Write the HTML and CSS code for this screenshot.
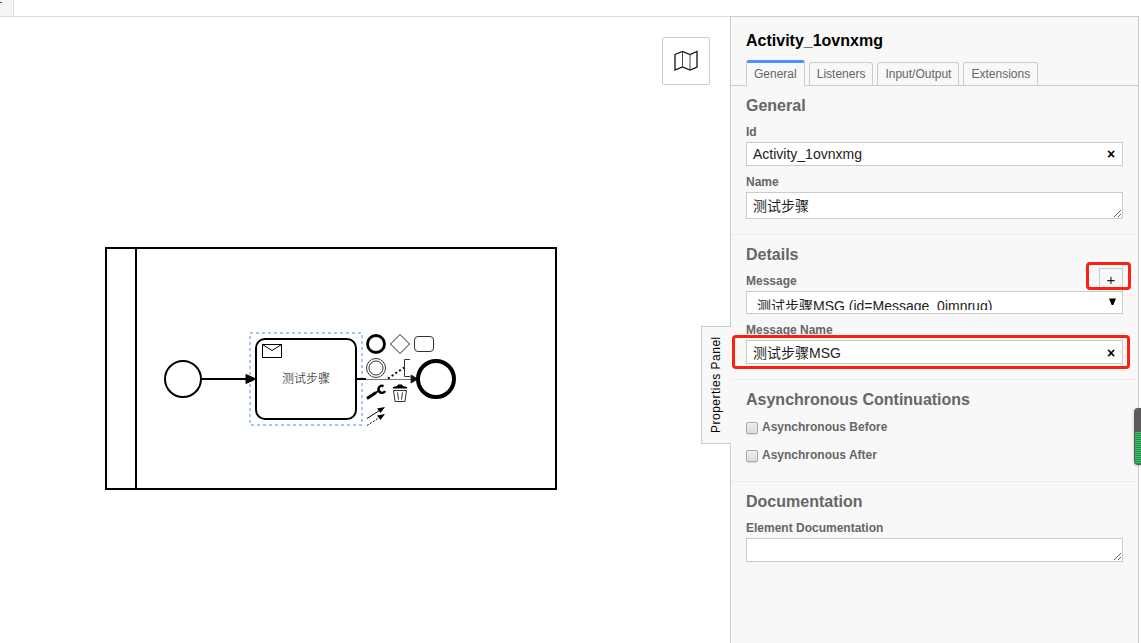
FILE: index.html
```html
<!DOCTYPE html>
<html lang="zh">

<head>
    <meta charset="UTF-8">
    <title>Process Modeler</title>
    <link rel="stylesheet" href="styles.css">
</head>

<body>
    <div class="topbar">
        <div class="file-tab"></div>
    </div>
    <main class="editor">
        <div class="canvas">
            <svg class="diagram" viewBox="0 17 730 626" width="730" height="626" fill="none" stroke="#000">
                <!-- pool -->
                <rect x="106" y="248" width="450" height="241" stroke-width="2" />
                <path d="M136 248V489" stroke-width="2" />

                <!-- send task -->
                <rect x="250" y="333" width="112" height="92" stroke="#a3c7fd" stroke-width="2" stroke-dasharray="3 3" />
                <rect x="256" y="339" width="100" height="80" rx="9" stroke-width="2" />
                <path d="M262.500 344.500H281.500V357.500H262.500ZM262.500 344.500L272 350.500L281.500 344.500" />
                <text class="task-name" x="306" y="383">测试步骤</text>

                <!-- start event and flow -->
                <circle cx="183" cy="379" r="18" stroke-width="2" />
                <path d="M201 379H248" stroke-width="2" />
                <path d="M246 374.500L256 379L246 383.500Z" fill="#000" />

                <!-- flow to the end event -->
                <path d="M357 379H366" stroke-width="2" />
                <path d="M366 379.500H411" stroke="#777" />
                <path d="M411 375L418 379L411 383Z" fill="#111" stroke="#333" />
                <circle cx="436" cy="379" r="18" stroke-width="4" />

                <!-- context pad -->
                <circle cx="376" cy="344" r="8.500" stroke-width="2.800" />
                <path d="M400 334.500L409.500 344L400 353.500L390.500 344Z" stroke="#222" />
                <rect x="414.500" y="336.500" width="19" height="15" rx="3.500" stroke="#333" />
                <circle cx="376" cy="368" r="9.500" stroke="#333" />
                <circle cx="376" cy="368" r="7" stroke="#333" />
                <path d="M388 378.500L404 367.500" stroke-width="2" stroke-dasharray="2 2.500" />
                <path d="M410 359.500H404.500V376.500H410" stroke="#333" />
                <path d="M367 398.500L376 392.500" stroke-width="3" />
                <path d="M376 392.500L380 390" stroke-width="1.500" />
                <path d="M383.500 386.200A3.500 3.500 0 1 0 385 391" stroke-width="2.500" />
                <path d="M393 388.500H407V387L403 386L402 384.500H398L397 386L393 387Z" fill="#000" stroke="none" />
                <path d="M393.500 390.500H406.500L405 401.500H395ZM397.500 392.500L398.500 399.500M402.500 392.500L401.500 399.500" stroke="#333" />
                <path d="M367 418.500L379 410.800" />
                <path d="M377 408.500L385 407L380.500 413Z" fill="#000" stroke="none" />
                <path d="M367 425.500L379 417.800" stroke-dasharray="2 1.500" />
                <path d="M377 415.500L385 414L380.500 420Z" fill="#000" stroke="none" />
            </svg>
            <button type="button" class="minimap-toggle" aria-label="Toggle minimap">
                <svg width="24" height="22" viewBox="0 0 24 22" fill="none" stroke="#111" stroke-width="1.300">
                    <path d="M1 4.500L8.500 1.500L16 4.500L23 1.500V17L16 20L8.500 17L1 20Z" />
                    <path d="M8.500 1.500V17M16 4.500V20" stroke-width="1" stroke="#444" />
                </svg>
            </button>
            <div class="panel-toggle">Properties Panel</div>
        </div>

        <aside class="panel">
            <h1>Activity_1ovnxmg</h1>
            <nav class="tabs">
                <div class="tab active">General</div>
                <div class="tab">Listeners</div>
                <div class="tab">Input/Output</div>
                <div class="tab">Extensions</div>
            </nav>

            <section class="group general">
                <h2>General</h2>
                <label>Id</label>
                <div class="field"><span>Activity_1ovnxmg</span><button type="button" class="clear">×</button></div>
                <label>Name</label>
                <textarea class="area name">测试步骤</textarea>
            </section>

            <section class="group details">
                <h2>Details</h2>
                <div class="label-row">
                    <label>Message</label>
                    <button type="button" class="add">+</button>
                </div>
                <div class="select">
                    <span class="option">测试步骤MSG (id=Message_0imnrug)</span>
                    <svg width="7" height="8" viewBox="0 0 7 8"><path d="M0 0.500H7L4.300 7H2.700Z" /></svg>
                </div>
                <label class="message-name">Message Name</label>
                <div class="field message"><span>测试步骤MSG</span><button type="button" class="clear">×</button></div>
                <div class="mark mark-add"></div>
                <div class="mark mark-name"></div>
            </section>

            <section class="group async">
                <h2>Asynchronous Continuations</h2>
                <div class="check"><span class="box"></span><label>Asynchronous Before</label></div>
                <div class="check"><span class="box"></span><label>Asynchronous After</label></div>
            </section>

            <section class="group documentation">
                <h2>Documentation</h2>
                <label>Element Documentation</label>
                <textarea class="area"></textarea>
            </section>
        </aside>
        <div class="meter"></div>
    </main>
</body>

</html>
```
FILE: styles.css
```css
* {
    box-sizing: border-box;
    margin: 0;
    padding: 0;
}

body {
    width: 1141px;
    height: 643px;
    overflow: hidden;
    display: flex;
    flex-direction: column;
    background: #fff;
    font-family: "Liberation Sans", "Noto Sans CJK SC", sans-serif;
}

.topbar {
    height: 16px;
    flex: none;
}

.file-tab {
    width: 14px;
    height: 16px;
    background: linear-gradient(#444, #444) 0 2px / 2px 1px no-repeat #f5f5f5;
    border-right: 1px solid #ddd;
}

.editor {
    position: relative;
    flex: 1;
    display: flex;
}

.canvas {
    position: relative;
    width: 730px;
    border-top: 1px solid #ddd;
}

.diagram {
    display: block;
}

.task-name {
    font-size: 12px;
    font-weight: 300;
    text-anchor: middle;
    fill: #000;
    stroke: none;
}

.minimap-toggle {
    position: absolute;
    top: 20px;
    left: 662px;
    width: 48px;
    height: 48px;
    display: grid;
    place-items: center;
    background: #fff;
    border: 1px solid #ccc;
    border-radius: 2px;
}

.panel-toggle {
    position: absolute;
    top: 309px;
    left: 701px;
    z-index: 1;
    width: 30px;
    height: 118px;
    line-height: 29px;
    text-align: center;
    writing-mode: vertical-rl;
    transform: rotate(180deg);
    font-size: 12px;
    letter-spacing: 0.5px;
    background: #f8f8f8;
    border: 1px solid #ccc;
    border-left: none;
}

.panel {
    width: 409px;
    background: #f8f8f8;
    border: 1px solid #ccc;
    border-bottom: none;
    color: #666;
}

h1 {
    height: 43px;
    padding: 14px 15px 0;
    font-size: 16px;
    line-height: 20px;
    color: #000;
}

.tabs {
    height: 26px;
    padding: 0 15px;
    display: flex;
    align-items: flex-end;
    gap: 4px;
    border-bottom: 1px solid #ccc;
}

.tab {
    height: 23px;
    padding: 0 7px;
    font-size: 12px;
    line-height: 22px;
    border: 1px solid #ccc;
    border-bottom: none;
    border-radius: 3px 3px 0 0;
}

.tab.active {
    height: 26px;
    margin-bottom: -1px;
    background: #f8f8f8;
    border-top: 3px solid #4d90ff;
}

.group {
    position: relative;
    padding: 10px 15px 0;
    border-bottom: 1px solid #ececec;
}

.general {
    height: 149px;
}

.details {
    height: 145px;
}

.async {
    height: 102px;
}

.documentation {
    border-bottom: none;
}

h2 {
    height: 27px;
    font-size: 16px;
    line-height: 20px;
}

label {
    display: block;
    height: 19px;
    font-size: 12px;
    font-weight: bold;
    line-height: 19px;
}

.field {
    height: 24px;
    margin-bottom: 7px;
    padding: 0 7px 0 6px;
    display: flex;
    align-items: center;
    justify-content: space-between;
    background: #fff;
    border: 1px solid #ccc;
    color: #222;
    font-size: 14px;
    line-height: 22px;
}

.field.message {
    padding-top: 1px;
}

.clear {
    width: 8px;
    border: none;
    background: none;
    font: bold 14px/20px "Liberation Sans", sans-serif;
    color: #000;
}

.area {
    display: block;
    width: 377px;
    height: 24px;
    padding: 3px 6px 0;
    overflow: hidden;
    border: 1px solid #ccc;
    background: #fff;
    color: #222;
    font: 14px/21px "Liberation Sans", "Noto Sans CJK SC", sans-serif;
}

.area.name {
    height: 27px;
}

.label-row {
    display: flex;
    justify-content: space-between;
    height: 19px;
}

.add {
    width: 24px;
    height: 24px;
    margin-top: -4px;
    background: #f8f8f8;
    border: 1px solid #ccc;
    font: 15px/22px "Liberation Sans", sans-serif;
    color: #222;
}

.select {
    position: relative;
    height: 23px;
    padding: 4px 6px 3px 10px;
    display: flex;
    justify-content: space-between;
    background: #fff;
    border: 1px solid #ccc;
}

/* the option line is taller than the select box, so its lower edge is cut */
.option {
    height: 14px;
    overflow: hidden;
    font-size: 14px;
    line-height: 20px;
    color: #222;
}

.select svg {
    margin-top: 2px;
    fill: #000;
}

.message-name {
    margin-top: 7px;
}

/* red highlights over the message controls */
.mark {
    position: absolute;
    border: 3px solid #fb2010;
    border-radius: 4px;
}

.mark-add {
    top: 27px;
    left: 355px;
    width: 45px;
    height: 28px;
}

.mark-name {
    top: 100px;
    left: 1px;
    z-index: 2;
    width: 398px;
    height: 34px;
}

.check {
    height: 28px;
    display: flex;
    gap: 4px;
}

.check label {
    line-height: 21px;
}

.box {
    width: 12px;
    height: 12px;
    margin-top: 5px;
    border: 1px solid #aaa;
    border-radius: 2px;
    background: linear-gradient(#eee, #ddd);
    box-shadow: 0 1px 1px #ddd;
}

.meter {
    position: absolute;
    top: 392px;
    left: 1134px;
    width: 7px;
    height: 57px;
    border: solid #5c5c5c;
    border-width: 24px 0 1px 1px;
    border-radius: 4px 0 0 4px;
    background: repeating-linear-gradient(#25d366 0 1px, #447a50 1px 2px);
    box-shadow: 0 1px 3px #bbb;
}
```
